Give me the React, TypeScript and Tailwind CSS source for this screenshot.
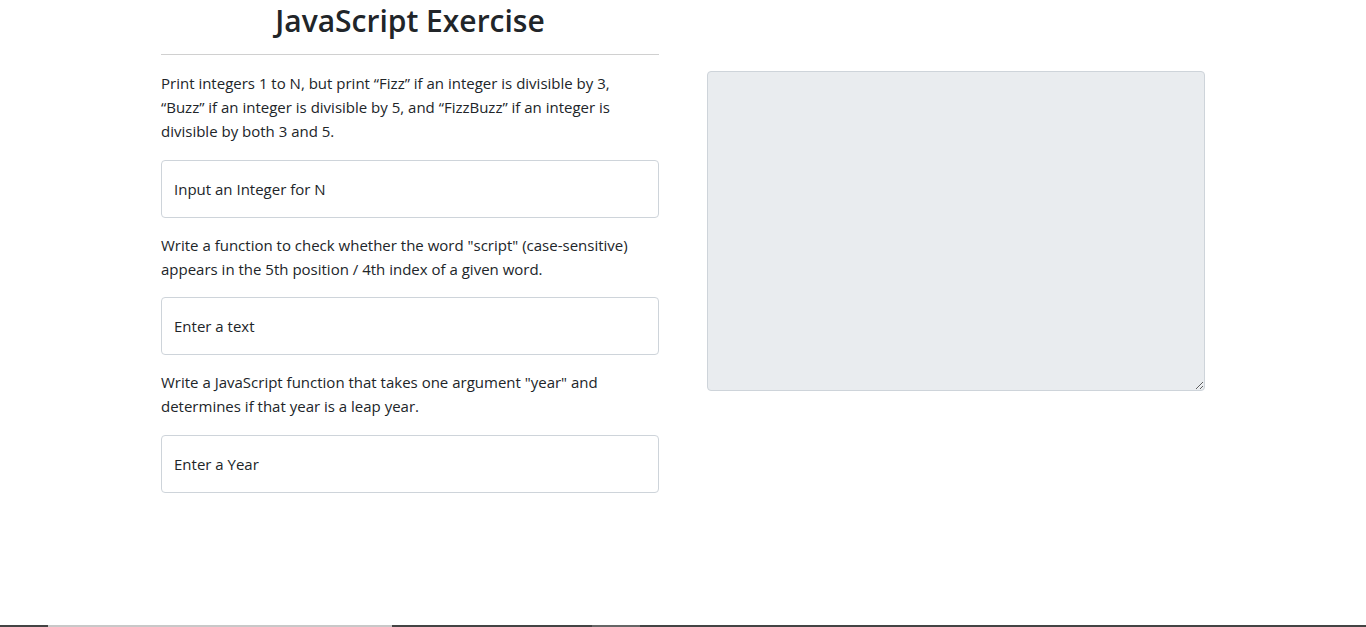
export default function App() {
  return (
    <div className="relative h-[627px] w-full overflow-hidden bg-white font-['Open_Sans',sans-serif] text-[#212529]">
      <div className="flex gap-[48px] pl-[161px]">
        <div className="w-[498px]">
          <h1 className="pt-[2px] text-center text-[30px] font-semibold leading-[38px]">JavaScript Exercise</h1>
          <hr className="mt-[14px] border-t border-[#d0d0d0]" />
          <p className="mt-[16px] pr-[30px] text-[15px] leading-[24px]">
            Print integers 1 to N, but print “Fizz” if an integer is divisible by 3, “Buzz” if an integer is divisible by 5, and “FizzBuzz” if an integer is divisible by both 3 and 5.
          </p>
          <input
            className="mt-[17px] block h-[58px] w-full rounded-[4px] border border-[#ced4da] px-[12px] text-[15px] placeholder:text-[#212529]"
            placeholder="Input an Integer for N"
          />
          <p className="mt-[15px] pr-[30px] text-[15px] leading-[24px]">
            Write a function to check whether the word "script" (case-sensitive) appears in the 5th position / 4th index of a given word.
          </p>
          <input
            className="mt-[16px] block h-[58px] w-full rounded-[4px] border border-[#ced4da] px-[12px] text-[15px] placeholder:text-[#212529]"
            placeholder="Enter a text"
          />
          <p className="mt-[15px] pr-[30px] text-[15px] leading-[24px]">
            Write a JavaScript function that takes one argument "year" and determines if that year is a leap year.
          </p>
          <input
            className="mt-[17px] block h-[58px] w-full rounded-[4px] border border-[#ced4da] px-[12px] text-[15px] placeholder:text-[#212529]"
            placeholder="Enter a Year"
          />
        </div>
        <div className="pt-[71px]">
          <textarea
            readOnly
            className="block h-[320px] w-[498px] rounded-[4px] border border-[#ced4da] bg-[#e9ecef]"
          />
        </div>
      </div>
      <div className="absolute bottom-0 left-0 flex h-[2px] w-full bg-[#444]">
        <div className="w-[48px]" />
        <div className="w-[344px] bg-[#c8c8c8]" />
        <div className="w-[200px]" />
        <div className="w-[48px] bg-[#666]" />
      </div>
    </div>
  );
}
